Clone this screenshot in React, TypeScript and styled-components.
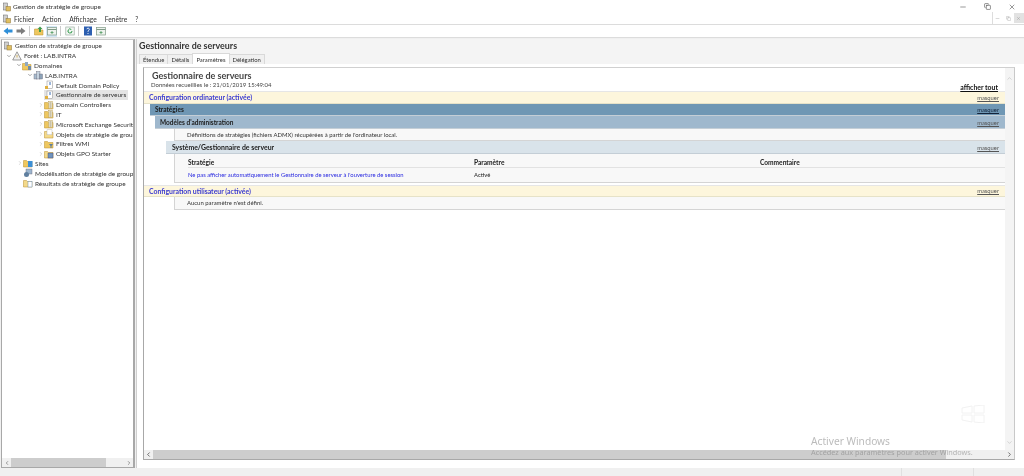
import React from 'react';
import styled, { createGlobalStyle } from 'styled-components';
import { ChevronDown, ChevronLeft, ChevronRight, ChevronUp, Minus, Copy, X } from 'lucide-react';

const Global = createGlobalStyle`
  html, body { margin: 0; padding: 0; background: #fff; overflow: hidden; }
  * { box-sizing: border-box; }
`;

const font = `Lato, "Noto Sans", "Liberation Sans", sans-serif`;

const s = {
  Window: styled.div`
    position: relative;
    width: 1024px;
    height: 476px;
    display: flex;
    flex-direction: column;
    background: #fff;
    color: #222;
    font-family: ${font};
    font-size: 6.45px;
    overflow: hidden;
    filter: blur(0.25px);
  `,
  TitleBar: styled.div`
    height: 13px;
    flex: none;
    display: flex;
    align-items: center;
    padding-left: 2px;
    gap: 1px;
  `,
  TitleText: styled.span`
    flex: 1;
    font-size: 6.5px;
    color: #333;
  `,
  WinButtons: styled.div`
    display: flex;
    color: #333;
  `,
  WinButton: styled.div`
    width: 24.5px;
    height: 13px;
    display: flex;
    align-items: center;
    justify-content: center;
  `,
  MenuBar: styled.div`
    height: 12px;
    flex: none;
    display: flex;
    align-items: center;
    padding-left: 2px;
    border-bottom: 1px solid #dcdcdc;
  `,
  Menu: styled.span<{ $gap: number }>`
    margin-left: ${(p) => p.$gap}px;
    font-size: 6.7px;
    color: #333;
  `,
  MdiButtons: styled.div`
    margin-left: auto;
    height: 12px;
    margin-top: -1px;
    display: flex;
    align-items: center;
    border-left: 1px solid #ddd;
    color: #888;
  `,
  MdiButton: styled.div<{ $active?: boolean }>`
    width: 10.5px;
    height: 10px;
    display: flex;
    align-items: center;
    justify-content: center;
    background: ${(p) => (p.$active ? '#e2e2e2' : 'transparent')};
  `,
  Toolbar: styled.div`
    height: 13px;
    flex: none;
    display: flex;
    align-items: center;
    padding-left: 2px;
    gap: 2px;
    border-bottom: 1px solid #dcdcdc;
  `,
  ToolButton: styled.div<{ $active?: boolean }>`
    width: 11px;
    height: 11px;
    display: flex;
    align-items: center;
    justify-content: center;
    background: ${(p) => (p.$active ? '#d5e8f7' : 'transparent')};
  `,
  ToolSep: styled.div`
    width: 1px;
    height: 10px;
    margin: 0 1px;
    background: #ccc;
  `,
  Body: styled.div`
    flex: 1;
    min-height: 0;
    display: flex;
    background: #f0f0f0;
    padding-top: 1px;
  `,
  TreePane: styled.div`
    width: 134px;
    flex: none;
    margin-left: 1px;
    display: flex;
    flex-direction: column;
    background: #fff;
    border: 1px solid #a8a8a8;
    border-right-width: 2px;
    border-top-color: #c8c8c8;
  `,
  TreeList: styled.div`
    flex: 1;
    padding-top: 1px;
    overflow: hidden;
  `,
  TreeRow: styled.div<{ $level: number }>`
    height: 9.8px;
    display: flex;
    align-items: center;
    padding-left: ${(p) => p.$level}px;
    white-space: nowrap;
    color: #333;
  `,
  Caret: styled.div`
    width: 7px;
    flex: none;
    display: flex;
    align-items: center;
    justify-content: center;
    color: #555;
  `,
  TreeItem: styled.div<{ $selected?: boolean }>`
    height: 9.8px;
    display: flex;
    align-items: center;
    background: ${(p) => (p.$selected ? '#e4e4e4' : 'transparent')};
  `,
  TreeLabel: styled.span`
    margin-left: 1px;
    padding: 0 2px 0 1px;
  `,
  HScroll: styled.div`
    height: 9px;
    flex: none;
    display: flex;
    align-items: center;
    justify-content: space-between;
    background: #f0f0f0;
    color: #444;
  `,
  ScrollThumb: styled.div<{ $w: number }>`
    width: ${(p) => p.$w}px;
    height: 9px;
    background: #cdcdcd;
  `,
  ScrollGap: styled.div`
    flex: 1;
  `,
  ScrollEnd: styled.div`
    width: 9px;
    flex: none;
    display: flex;
    align-items: center;
    justify-content: center;
  `,
  Detail: styled.div`
    flex: 1;
    min-width: 0;
    margin-left: 1px;
    display: flex;
    flex-direction: column;
    background: #f4f4f4;
    border-left: 1px solid #cfcfcf;
  `,
  DetailTitle: styled.div`
    height: 14px;
    flex: none;
    padding: 1px 0 0 2px;
    font-size: 8.9px;
    font-weight: 700;
    color: #333;
    line-height: 12px;
  `,
  Tabs: styled.div`
    height: 11px;
    flex: none;
    display: flex;
    padding-left: 2px;
    align-items: flex-end;
  `,
  Tab: styled.div<{ $active?: boolean }>`
    height: ${(p) => (p.$active ? 11 : 10)}px;
    padding: 0 3px;
    display: flex;
    align-items: center;
    font-size: 5.9px;
    color: #333;
    background: ${(p) => (p.$active ? '#fff' : '#f0f0f0')};
    border: 1px solid #d9d9d9;
    border-bottom: none;
    margin-right: -1px;
  `,
  TabPage: styled.div`
    flex: 1;
    min-height: 0;
    display: flex;
    padding: 3px 9px 8px 6px;
    background: #fff;
  `,
  Report: styled.div`
    flex: 1;
    min-width: 0;
    display: flex;
    flex-direction: column;
    border: 1px solid #a8a8a8;
    border-top-color: #d0d0d0;
    border-right-color: #c8c8c8;
    background: #fff;
  `,
  ReportMain: styled.div`
    flex: 1;
    min-height: 0;
    display: flex;
  `,
  ReportBody: styled.div`
    flex: 1;
    min-width: 0;
  `,
  VScroll: styled.div`
    width: 9px;
    flex: none;
    display: flex;
    flex-direction: column;
    justify-content: space-between;
    align-items: center;
    padding: 7px 0 4px;
    background: #f4f4f4;
    color: #aaa;
  `,
  ReportHead: styled.div`
    height: 23px;
    padding: 2px 0 0 7px;
    position: relative;
  `,
  ReportTitle: styled.div`
    font-size: 9px;
    font-weight: 700;
    color: #444;
    line-height: 11px;
    margin-left: 1px;
  `,
  ReportDate: styled.div`
    font-size: 6px;
    color: #444;
    line-height: 8px;
  `,
  ShowAll: styled.a`
    position: absolute;
    right: 7px;
    bottom: 0;
    font-size: 6.9px;
    font-weight: 700;
    color: #111;
    text-decoration: underline;
    line-height: 8px;
  `,
  Band: styled.div<{ $tone: 'yellow' | 'dark' | 'mid' | 'light'; $indent: number }>`
    height: 12.5px;
    margin-left: ${(p) => p.$indent}px;
    padding: 0 6px 0 5px;
    display: flex;
    align-items: center;
    justify-content: space-between;
    font-size: ${(p) => (p.$tone === 'dark' || p.$tone === 'mid' ? 6.5 : 6.9)}px;
    font-weight: 700;
    color: ${(p) => (p.$tone === 'yellow' ? '#3a3ad0' : '#1c1c1c')};
    background: ${(p) =>
      ({ yellow: '#fdf6dc', dark: '#6f97b4', mid: '#9fb8cd', light: '#d9e3ea' })[p.$tone]};
    border-top: 1px solid ${(p) => (p.$tone === 'yellow' ? '#e6e6e6' : 'transparent')};
    border-bottom: 1px solid ${(p) => (p.$tone === 'yellow' ? '#e6e2c8' : '#c4ced6')};
  `,
  BandLabel: styled.span<{ $pad?: number }>`
    margin-left: ${(p) => p.$pad ?? 0}px;
  `,
  Hide: styled.a<{ $dark?: boolean }>`
    font-size: 5.8px;
    font-weight: 400;
    color: ${(p) => (p.$dark ? '#13233a' : '#555')};
    text-decoration: underline;
  `,
  Panel: styled.div<{ $indent: number }>`
    height: 12.5px;
    margin-left: ${(p) => p.$indent}px;
    padding-left: 12px;
    background: #f8f8f8;
    border-left: 1px solid #d4d4d4;
    border-bottom: 1px solid #d4d4d4;
    font-size: 5.95px;
    color: #333;
    display: flex;
    align-items: center;
  `,
  TableWrap: styled.div`
    height: 29.5px;
    margin-left: 30px;
    background: #f8f8f8;
    border-left: 1px solid #d4d4d4;
    border-bottom: 1px solid #d4d4d4;
    margin-bottom: 1.500px;
  `,
  TableRow: styled.div<{ $head?: boolean }>`
    height: ${(p) => (p.$head ? 14 : 13)}px;
    margin-left: 13px;
    padding-top: ${(p) => (p.$head ? 3 : 0)}px;
    display: grid;
    grid-template-columns: 286px 286px 1fr;
    align-items: center;
    font-size: ${(p) => (p.$head ? 6.6 : 5.85)}px;
    font-weight: ${(p) => (p.$head ? 700 : 400)};
    color: #222;
    border-bottom: ${(p) => (p.$head ? '1px solid #e2e2e2' : 'none')};
  `,
  PolicyLink: styled.span`
    color: #2a2ae0;
  `,
  StatusBar: styled.div`
    height: 8px;
    flex: none;
    display: grid;
    grid-template-columns: 902px 72px 1fr;
    background: #f0f0f0;
  `,
  StatusCell: styled.div`
    border-right: 1px solid #e0e0e0;
  `,
  Watermark: styled.div`
    position: absolute;
    left: 811px;
    top: 435px;
    color: rgba(120, 120, 120, 0.5);
    font-family: "Noto Sans", sans-serif;
    white-space: nowrap;
    pointer-events: none;
  `,
  WatermarkTitle: styled.div`
    font-size: 10.2px;
    line-height: 12px;
  `,
  WatermarkSub: styled.div`
    font-size: 7.3px;
    line-height: 8px;
    margin-top: 1px;
  `,
  Logo: styled.svg`
    position: absolute;
    left: 960px;
    top: 405px;
  `,
};

type Kind = 'gpm' | 'forest' | 'domains' | 'domain' | 'gpo' | 'ou' | 'gpoFolder' | 'wmi' | 'starter' | 'sites' | 'model' | 'results';

const folder = (c = '#eec75f') => (
  <path d="M.5 2.500h3l1 1h4.500v5.500h-8.500z" fill={c} stroke="#b98f2c" strokeWidth=".5" />
);

const TreeIcon = ({ kind }: { kind: Kind }) => (
  <svg width="10" height="10" viewBox="0 0 10 10" style={{ flex: 'none' }}>
    {kind === 'gpm' && (
      <>
        <rect x="1.500" y="1" width="4" height="7" fill="#d0d0d0" stroke="#666" strokeWidth=".5" />
        <rect x="4" y="4.500" width="4.500" height="4.500" fill="#e0bf60" stroke="#8b7136" strokeWidth=".5" />
      </>
    )}
    {kind === 'forest' && (
      <>
        <path d="M5 .8 9.300 9H.7z" fill="#eee" stroke="#777" strokeWidth=".7" />
        <path d="M5 4v2.500" stroke="#c9a13a" strokeWidth=".8" />
      </>
    )}
    {kind === 'domains' && (
      <>
        {folder()}
        <rect x="3" y="1" width="3" height="4" fill="#8fa9c2" />
        <rect x="6" y="5" width="3" height="4" fill="#6f8aa6" />
      </>
    )}
    {kind === 'domain' && (
      <>
        <rect x="1" y="4" width="3.500" height="5" fill="#a8bccf" stroke="#667" strokeWidth=".4" />
        <rect x="3.500" y="1.500" width="3.500" height="7.500" fill="#c6d3df" stroke="#667" strokeWidth=".4" />
        <rect x="6.500" y="4" width="3" height="5" fill="#8da3b8" stroke="#667" strokeWidth=".4" />
      </>
    )}
    {kind === 'gpo' && (
      <>
        <rect x="3" y="1" width="5.500" height="7.500" fill="#fff" stroke="#8a8a8a" strokeWidth=".5" />
        <path d="M1 6h3v3H1z" fill="#e0b040" />
        <path d="M6 2v3" stroke="#3a6fb5" />
      </>
    )}
    {kind === 'ou' && (
      <>
        {folder()}
        <rect x="4.500" y="1.500" width="4" height="7" fill="#f7efd2" stroke="#a98a3a" strokeWidth=".4" />
        <path d="M5.500 3h2M5.500 5h2M5.500 7h2" stroke="#555" strokeWidth=".6" />
      </>
    )}
    {kind === 'gpoFolder' && (
      <>
        {folder('#f3d98a')}
        <rect x="3" y=".8" width="5" height="5" fill="#fff" stroke="#aaa" strokeWidth=".4" />
      </>
    )}
    {kind === 'wmi' && (
      <>
        {folder()}
        <path d="M5 5h4L7.500 7v2H6.500V7z" fill="#5d7f9e" />
      </>
    )}
    {kind === 'starter' && (
      <>
        {folder('#f3d98a')}
        <rect x="4" y="4" width="5" height="5" fill="#6f93bd" stroke="#446" strokeWidth=".4" />
      </>
    )}
    {kind === 'sites' && (
      <>
        {folder()}
        <rect x="5" y="3" width="4.500" height="6" fill="#3c8fd6" />
      </>
    )}
    {kind === 'model' && (
      <>
        <rect x="3" y="1" width="6" height="5" fill="#9db6cf" stroke="#667" strokeWidth=".4" />
        <circle cx="3.500" cy="6.500" r="2.500" fill="#5f7f9f" />
      </>
    )}
    {kind === 'results' && (
      <>
        {folder('#f3d98a')}
        <rect x="5" y="3.500" width="4" height="5.500" fill="#fff" stroke="#6b8fb5" strokeWidth=".5" />
      </>
    )}
  </svg>
);

type TreeEntry = { label: string; kind: Kind; level: number; caret?: 'open' | 'closed' | 'none'; selected?: boolean };

const treeRows: TreeEntry[] = [
  { label: 'Gestion de stratégie de groupe', kind: 'gpm', level: 1 },
  { label: 'Forêt : LAB.INTRA', kind: 'forest', level: 3, caret: 'open' },
  { label: 'Domaines', kind: 'domains', level: 13, caret: 'open' },
  { label: 'LAB.INTRA', kind: 'domain', level: 24, caret: 'open' },
  { label: 'Default Domain Policy', kind: 'gpo', level: 35, caret: 'none' },
  { label: 'Gestionnaire de serveurs', kind: 'gpo', level: 35, caret: 'none', selected: true },
  { label: 'Domain Controllers', kind: 'ou', level: 35, caret: 'closed' },
  { label: 'IT', kind: 'ou', level: 35, caret: 'closed' },
  { label: 'Microsoft Exchange Security Groups', kind: 'ou', level: 35, caret: 'closed' },
  { label: 'Objets de stratégie de groupe', kind: 'gpoFolder', level: 35, caret: 'closed' },
  { label: 'Filtres WMI', kind: 'wmi', level: 35, caret: 'closed' },
  { label: 'Objets GPO Starter', kind: 'starter', level: 35, caret: 'closed' },
  { label: 'Sites', kind: 'sites', level: 14, caret: 'closed' },
  { label: 'Modélisation de stratégie de groupe', kind: 'model', level: 14, caret: 'none' },
  { label: 'Résultats de stratégie de groupe', kind: 'results', level: 14, caret: 'none' },
];

const Tool = ({ children, active }: { children: React.ReactNode; active?: boolean }) => (
  <s.ToolButton $active={active}>
    <svg width="10" height="10" viewBox="0 0 10 10">
      {children}
    </svg>
  </s.ToolButton>
);

const PanesIcon = () => (
  <>
    <rect x=".5" y="1.500" width="9" height="7.500" fill="#eef3ee" stroke="#7f9a86" strokeWidth=".7" />
    <path d="M.5 3.500h9" stroke="#7f9a86" />
    <path d="M5 5v3M3.500 6.500h3" stroke="#4f9a5f" strokeWidth=".8" />
  </>
);

const App = () => (
  <s.Window>
    <Global />
    <s.TitleBar>
      <TreeIcon kind="gpm" />
      <s.TitleText>Gestion de stratégie de groupe</s.TitleText>
      <s.WinButtons>
        <s.WinButton><Minus size={8} strokeWidth={1.5} /></s.WinButton>
        <s.WinButton><Copy size={7} strokeWidth={1.8} /></s.WinButton>
        <s.WinButton><X size={8} strokeWidth={1.5} /></s.WinButton>
      </s.WinButtons>
    </s.TitleBar>
    <s.MenuBar>
      <TreeIcon kind="gpm" />
      <s.Menu $gap={2}>Fichier</s.Menu>
      <s.Menu $gap={8}>Action</s.Menu>
      <s.Menu $gap={8}>Affichage</s.Menu>
      <s.Menu $gap={8}>Fenêtre</s.Menu>
      <s.Menu $gap={8}>?</s.Menu>
      <s.MdiButtons>
        <s.MdiButton><Minus size={5} strokeWidth={1.5} /></s.MdiButton>
        <s.MdiButton><Copy size={5} strokeWidth={1.5} /></s.MdiButton>
        <s.MdiButton $active><X size={5} strokeWidth={1.5} /></s.MdiButton>
      </s.MdiButtons>
    </s.MenuBar>
    <s.Toolbar>
      <Tool><path d="M.5 5 5 1.500V3.500h4.500v3H5v2z" fill="#2f8fd8" /></Tool>
      <Tool><path d="M9.500 5 5 1.500V3.500H.5v3H5v2z" fill="#7d7d7d" /></Tool>
      <s.ToolSep />
      <Tool>
        <path d="M.5 3h3.500l1 1h4v5H.5z" fill="#eec75f" stroke="#b98f2c" strokeWidth=".5" />
        <path d="M6 .5 3.500 3H5v3h2V3h1.500z" fill="#3f9a4a" />
      </Tool>
      <Tool active><PanesIcon /></Tool>
      <s.ToolSep />
      <Tool>
        <rect x=".8" y="1" width="8.400" height="8" fill="#f2f6f2" stroke="#8ea596" strokeWidth=".6" />
        <path d="M7 5a2 2 0 1 1-.7-1.500" fill="none" stroke="#2f9a4a" strokeWidth="1" />
      </Tool>
      <s.ToolSep />
      <Tool>
        <rect x="1" y=".5" width="8" height="9" fill="#2d5fb0" />
        <path d="M3.800 3.200C4 1.800 6.500 1.900 6.300 3.400 6.200 4.300 5 4.500 5 5.800M5 7v1" fill="none" stroke="#fff" strokeWidth=".9" />
      </Tool>
      <Tool><PanesIcon /></Tool>
    </s.Toolbar>
    <s.Body>
      <s.TreePane>
        <s.TreeList>
          {treeRows.map((row) => (
            <s.TreeRow key={row.label} $level={row.level}>
              {row.caret && (
                <s.Caret>
                  {row.caret === 'open' && <ChevronDown size={6} strokeWidth={2} />}
                  {row.caret === 'closed' && <ChevronRight size={6} strokeWidth={1.5} color="#999" />}
                </s.Caret>
              )}
              <s.TreeItem $selected={row.selected}>
                <TreeIcon kind={row.kind} />
                <s.TreeLabel>{row.label}</s.TreeLabel>
              </s.TreeItem>
            </s.TreeRow>
          ))}
        </s.TreeList>
        <s.HScroll>
          <s.ScrollEnd><ChevronLeft size={6} strokeWidth={2} /></s.ScrollEnd>
          <s.ScrollThumb $w={95} />
          <s.ScrollGap />
          <s.ScrollEnd><ChevronRight size={6} strokeWidth={2} /></s.ScrollEnd>
        </s.HScroll>
      </s.TreePane>
      <s.Detail>
        <s.DetailTitle>Gestionnaire de serveurs</s.DetailTitle>
        <s.Tabs>
          <s.Tab>Étendue</s.Tab>
          <s.Tab>Détails</s.Tab>
          <s.Tab $active>Paramètres</s.Tab>
          <s.Tab>Délégation</s.Tab>
        </s.Tabs>
        <s.TabPage>
          <s.Report>
            <s.ReportMain>
              <s.ReportBody>
                <s.ReportHead>
                  <s.ReportTitle>Gestionnaire de serveurs</s.ReportTitle>
                  <s.ReportDate>Données recueillies le : 21/01/2019 15:49:04</s.ReportDate>
                  <s.ShowAll>afficher tout</s.ShowAll>
                </s.ReportHead>
                <s.Band $tone="yellow" $indent={0}>
                  Configuration ordinateur (activée)<s.Hide>masquer</s.Hide>
                </s.Band>
                <s.Band $tone="dark" $indent={6}>
                  Stratégies<s.Hide $dark>masquer</s.Hide>
                </s.Band>
                <s.Band $tone="mid" $indent={11}>
                  Modèles d'administration<s.Hide>masquer</s.Hide>
                </s.Band>
                <s.Panel $indent={30}>
                  Définitions de stratégies (fichiers ADMX) récupérées à partir de l'ordinateur local.
                </s.Panel>
                <s.Band $tone="light" $indent={22}>
                  <s.BandLabel $pad={1}>Système/Gestionnaire de serveur</s.BandLabel>
                  <s.Hide>masquer</s.Hide>
                </s.Band>
                <s.TableWrap>
                  <s.TableRow $head>
                    <span>Stratégie</span>
                    <span>Paramètre</span>
                    <span>Commentaire</span>
                  </s.TableRow>
                  <s.TableRow>
                    <s.PolicyLink>Ne pas afficher automatiquement le Gestionnaire de serveur à l'ouverture de session</s.PolicyLink>
                    <span>Activé</span>
                    <span />
                  </s.TableRow>
                </s.TableWrap>
                <s.Band $tone="yellow" $indent={0}>
                  Configuration utilisateur (activée)<s.Hide>masquer</s.Hide>
                </s.Band>
                <s.Panel $indent={30}>Aucun paramètre n'est défini.</s.Panel>
              </s.ReportBody>
              <s.VScroll>
                <ChevronUp size={7} strokeWidth={1.5} />
                <ChevronDown size={7} strokeWidth={1.5} />
              </s.VScroll>
            </s.ReportMain>
            <s.HScroll>
              <s.ScrollEnd><ChevronLeft size={7} strokeWidth={2.5} /></s.ScrollEnd>
              <s.ScrollThumb $w={793} />
              <s.ScrollGap />
              <s.ScrollEnd><ChevronRight size={7} strokeWidth={2.5} /></s.ScrollEnd>
            </s.HScroll>
          </s.Report>
        </s.TabPage>
      </s.Detail>
    </s.Body>
    <s.StatusBar>
      <s.StatusCell />
      <s.StatusCell />
      <div />
    </s.StatusBar>
    <s.Logo width="26" height="18" viewBox="0 0 26 18">
      <path d="M2 3l10-2v7H2zM14 1l10-1v8H14zM2 10h10v7L2 15zM14 10h10v8l-10-1z" fill="none" stroke="#f2f2f2" strokeWidth="1" />
    </s.Logo>
    <s.Watermark>
      <s.WatermarkTitle>Activer Windows</s.WatermarkTitle>
      <s.WatermarkSub>Accédez aux paramètres pour activer Windows.</s.WatermarkSub>
    </s.Watermark>
  </s.Window>
);

export default App;
